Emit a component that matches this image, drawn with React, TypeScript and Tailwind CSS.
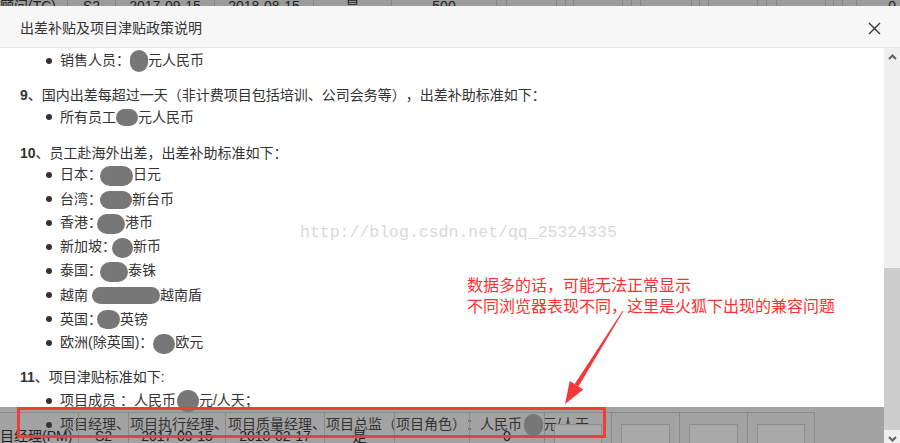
const topCells = [
  { w: 'w-[68px]', t: '顾问(TC)', a: 'text-left' },
  { w: 'w-[48px]', t: 'S2', a: 'text-center' },
  { w: 'w-[99px]', t: '2017-09-15', a: 'text-center' },
  { w: 'w-[99px]', t: '2018-08-15', a: 'text-center' },
  { w: 'w-[78px]', t: '是', a: 'text-center' },
  { w: 'w-[105px]', t: '500', a: 'text-center' },
  { w: 'w-[10px]', t: '', a: '' },
  { w: 'w-[50px]', t: '', a: '' },
  { w: 'w-[9px]', t: '', a: '' },
  { w: 'w-[8px]', t: '', a: '' },
  { w: 'w-[49px]', t: '', a: '' },
  { w: 'w-[9px]', t: '', a: '' },
  { w: 'w-[9px]', t: '', a: '' },
  { w: 'w-[51px]', t: '', a: '' },
  { w: 'w-[8px]', t: '', a: '' },
  { w: 'w-[9px]', t: '', a: '' },
  { w: 'w-[49px]', t: '', a: '' },
  { w: 'w-[9px]', t: '', a: '' },
  { w: 'w-[10px]', t: '', a: '' },
  { w: 'w-[49px]', t: '', a: '' },
  { w: 'w-[8px]', t: '', a: '' },
  { w: 'w-[9px]', t: '', a: '' },
  { w: 'w-[14px]', t: '', a: '' },
];

const bottomCells = [
  { w: 'w-[50px]', t: 'S2', box: false },
  { w: 'w-[97px]', t: '2017-09-15', box: false },
  { w: 'w-[99px]', t: '2018-02-17', box: false },
  { w: 'w-[70px]', t: '是', box: false },
  { w: 'w-[75px]', t: '', box: false },
  { w: 'w-[75px]', t: '0', box: false },
  { w: 'w-[67px]', t: '', box: true },
  { w: 'w-[68px]', t: '', box: true },
  { w: 'w-[68px]', t: '', box: true },
  { w: 'w-[67px]', t: '', box: true },
];

// gray smudge hiding the amounts
const Blob = ({ className }: { className: string }) => (
  <span className={`inline-block align-middle rounded-full bg-[#777] blur-[0.6px] ${className}`} />
);

const Item = ({ children }: { children: React.ReactNode }) => (
  <div className="flex items-center h-6 pl-[46px] whitespace-nowrap">
    <span className="w-[6px] h-[6px] rounded-full bg-[#333] mr-2 shrink-0" />
    <span>{children}</span>
  </div>
);

const Heading = ({ num, text, className = '' }: { num: string; text: string; className?: string }) => (
  <div className={`pl-5 leading-[20px] whitespace-nowrap ${className}`}>
    <span className="font-bold">{num}</span>
    {text}
  </div>
);

export default function App() {
  return (
    <div className="relative w-[900px] h-[443px] overflow-hidden bg-white font-['Liberation_Sans','Noto_Sans_CJK_SC',sans-serif] text-[14px] text-[#333] [text-spacing-trim:space-all]">
      {/* table row peeking above the dialog */}
      <div className="h-[6px] overflow-hidden bg-[#9b9b9b] text-[#222]">
        <div className="flex -mt-[4px] h-[20px] leading-[20px]">
          {topCells.map((c, i) => (
            <div key={i} className={`${c.w} ${c.a} shrink-0 border-r border-[#858585] whitespace-nowrap`}>
              {c.t}
            </div>
          ))}
          <div className="flex-1 text-right pr-[4px]">0</div>
        </div>
      </div>

      {/* Dialog header */}
      <div className="flex items-center justify-between h-[42px] pt-[3px] pl-5 pr-[19px] bg-[#f7f7f7] border-b border-[#e5e5e5]">
        <span>出差补贴及项目津贴政策说明</span>
        <svg width="13" height="13" viewBox="0 0 13 13" className="text-[#333]">
          <path d="M1 1 L12 12 M12 1 L1 12" stroke="currentColor" strokeWidth="1.4" />
        </svg>
      </div>

      {/* Dialog body */}
      <div className="flex h-[395px]">
        <div className="w-[884px]">
          <div className="h-[359px] pt-px">
            <Item>
              销售人员：<Blob className="w-[18px] h-[22px] -mt-[2px]" />
              元人民币
            </Item>
            <Heading num="9" text="、国内出差每超过一天（非计费项目包括培训、公司会务等），出差补助标准如下：" className="mt-3" />
            <Item>
              所有员工<Blob className="w-[22px] h-[17px]" />
              元人民币
            </Item>
            <Heading num="10" text="、员工赴海外出差，出差补助标准如下：" className="mt-[14px]" />
            <Item>
              日本：<Blob className="w-[33px] h-[20px] -ml-[2px]" />
              日元
            </Item>
            <Item>
              台湾：<Blob className="w-[32px] h-[18px] -ml-[2px]" />
              新台币
            </Item>
            <Item>
              香港：<Blob className="w-[28px] h-[20px] -ml-[5px]" />
              港币
            </Item>
            <Item>
              新加坡：<Blob className="w-[21px] h-[20px] -ml-[4px]" />
              新币
            </Item>
            <Item>
              泰国：<Blob className="w-[28px] h-[20px] -ml-[2px]" />
              泰铢
            </Item>
            <Item>
              越南<Blob className="w-[68px] h-[17px] ml-[4px]" />
              越南盾
            </Item>
            <Item>
              英国：<Blob className="w-[23px] h-[19px] -ml-[5px]" />
              英镑
            </Item>
            <Item>
              欧洲(除英国)：<Blob className="w-[22px] h-[20px] mt-[2px]" />
              欧元
            </Item>
            <Heading num="11" text="、项目津贴标准如下:" className="mt-[12px] mb-[2px]" />
            <Item>
              项目成员 ：人民币<Blob className="w-[22px] h-[22px] ml-px" />
              元/人天；
            </Item>
            <Item>
              项目经理、项目执行经理、项目质量经理、项目总监（项目角色）：人民币
              <Blob className="w-[19px] h-[22px] ml-[2px]" />
              元/人天。
            </Item>
          </div>

          {/* table row below the dialog */}
          <div className="flex h-[36px] bg-[#a3a3a3] text-[#222] leading-[20px]">
            <div className="w-[79px] shrink-0 overflow-hidden border-r border-t border-[#8a8a8a] mt-[5px] pt-[13px] whitespace-nowrap">
              <span className="-ml-[14px] inline-block">项目经理(PM)</span>
            </div>
            {bottomCells.map((c, i) => (
              <div
                key={i}
                className={`${c.w} shrink-0 border-r border-t border-[#8a8a8a] mt-[5px] pt-[13px] text-center whitespace-nowrap`}
              >
                {c.box ? (
                  <div className="mx-[9px] -mt-[2px] h-[30px] border border-[#8e8e8e] bg-[#a9a9a9]" />
                ) : (
                  c.t
                )}
              </div>
            ))}
            <div className="w-px" />
          </div>
        </div>

        {/* scrollbar */}
        <div className="w-[16px] bg-[#f0f0f0] flex flex-col overflow-hidden">
          <div className="h-[17px] shrink-0 flex items-center justify-center">
            <svg width="9" height="6" viewBox="0 0 9 6">
              <path d="M1 5 L4.5 1.5 L8 5" fill="none" stroke="#606060" strokeWidth="2" />
            </svg>
          </div>
          <div className="h-[203px] shrink-0" />
          <div className="h-[162px] shrink-0 bg-[#cdcdcd]" />
          <div className="h-[17px] shrink-0 flex items-center justify-center">
            <svg width="9" height="6" viewBox="0 0 9 6">
              <path d="M1 1 L4.5 4.5 L8 1" fill="none" stroke="#606060" strokeWidth="2" />
            </svg>
          </div>
        </div>
      </div>

      {/* watermark */}
      <div className="absolute left-[300px] top-[222px] font-['Liberation_Mono',monospace] text-[16.5px] leading-[22px] text-[#d9d9d9] whitespace-nowrap">
        http://blog.csdn.net/qq_25324335
      </div>

      {/* annotation */}
      <div className="absolute left-[467px] top-[274px] text-[16px] leading-[21px] text-[#ff3030] font-['Noto_Sans_CJK_SC',sans-serif] whitespace-nowrap">
        <p>数据多的话，可能无法正常显示</p>
        <p>不同浏览器表现不同，这里是火狐下出现的兼容问题</p>
      </div>
      <svg className="absolute left-0 top-0 pointer-events-none" width="900" height="443" viewBox="0 0 900 443">
        <polygon points="623.4,311.3 622.6,310.7 574.7,384.1 578.5,386.5" fill="#f03a3a" />
        <polygon points="565,404 583.4,389.5 569.8,381.1" fill="#f03a3a" />
      </svg>
      <div className="absolute left-[17px] top-[407px] w-[589px] h-[31px] border-[3px] border-[#f23c3c]" />
    </div>
  );
}
